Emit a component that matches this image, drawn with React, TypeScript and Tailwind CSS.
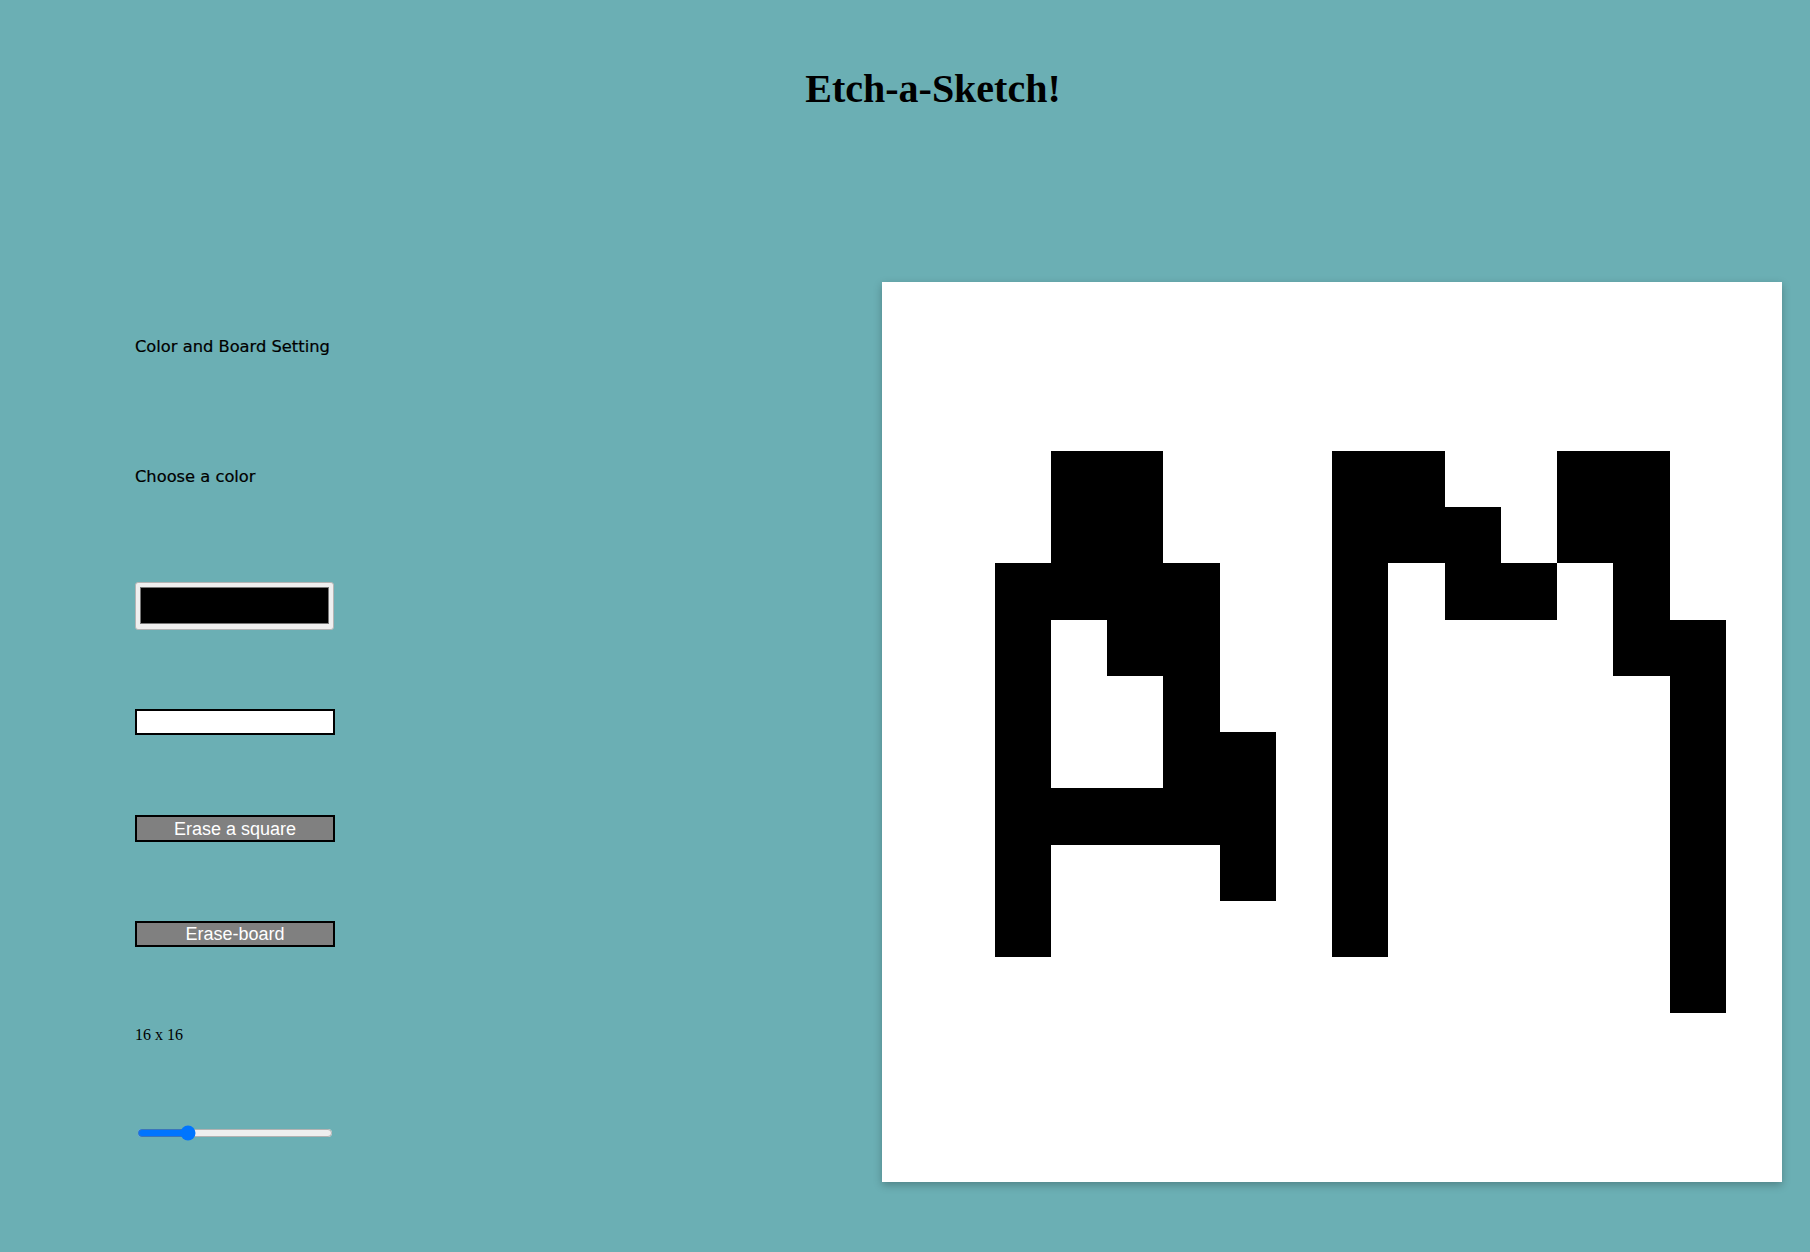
import React from 'react'

// rows of filled squares on the 16x16 board (row -> columns)
const filled: Record<number, number[]> = {
  3: [3, 4, 8, 9, 12, 13],
  4: [3, 4, 8, 9, 10, 12, 13],
  5: [2, 3, 4, 5, 8, 10, 11, 13],
  6: [2, 4, 5, 8, 13, 14],
  7: [2, 5, 8, 14],
  8: [2, 5, 6, 8, 14],
  9: [2, 3, 4, 5, 6, 8, 14],
  10: [2, 6, 8, 14],
  11: [2, 8, 14],
  12: [14],
}

const SIZE = 16

const Board: React.FC = () => {
  const cells = []
  for (let r = 0; r < SIZE; r++) {
    for (let c = 0; c < SIZE; c++) {
      const on = filled[r]?.includes(c)
      cells.push(
        <div key={`${r}-${c}`} className={on ? 'bg-black' : 'bg-white'}></div>
      )
    }
  }
  return (
    <div className="grid grid-cols-16 grid-rows-16 w-[900px] h-[900px] bg-white shadow-[0_3px_8px_rgba(0,0,0,0.25)]">
      {cells}
    </div>
  )
}

const labelFont = { fontFamily: '"DejaVu Sans", Verdana, sans-serif', WebkitTextStroke: '0.2px black' }
const btnFont = { fontFamily: '"Liberation Sans", Arial, sans-serif' }

export default function App() {
  return (
    <div className="min-h-screen w-full bg-[#6bafb4] text-black">
      <h1
        className="pt-[66px] pl-[56px] text-center text-[40px] leading-[46px] font-bold"
        style={{ fontFamily: '"Liberation Serif", "Times New Roman", serif' }}
      >
        Etch-a-Sketch!
      </h1>

      <div className="flex mt-[170px] pl-[135px] pr-[28px] pb-[70px]">
        <div className="flex flex-col w-[200px]">
          <p className="mt-[55px] text-[16.3px] leading-[19px] whitespace-nowrap" style={labelFont}>
            Color and Board Setting
          </p>
          <p className="mt-[111px] text-[16.3px] leading-[19px] whitespace-nowrap" style={labelFont}>
            Choose a color
          </p>

          <div className="mt-[96px] w-[199px] h-[48px] bg-[#efefef] border border-[#b5b5b5] rounded-[3px] px-[4px] pt-[4px] pb-[5px]">
            <div className="w-full h-full bg-black border border-[#777]"></div>
          </div>

          <input
            type="text"
            className="mt-[79px] w-[200px] h-[26px] bg-white border-2 border-black outline-none"
          />

          <button
            className="mt-[80px] w-[200px] h-[27px] bg-[#808080] border-2 border-black text-white text-[18px] leading-[20px]"
            style={btnFont}
          >
            Erase a square
          </button>
          <button
            className="mt-[79px] w-[200px] h-[26px] bg-[#808080] border-2 border-black text-white text-[18px] leading-[20px]"
            style={btnFont}
          >
            Erase-board
          </button>

          <p
            className="mt-[79px] text-[16px] leading-[18px]"
            style={{ fontFamily: '"Liberation Serif", "Times New Roman", serif' }}
          >
            16 x 16
          </p>

          <input
            type="range"
            min={1}
            max={64}
            defaultValue={16}
            className="mt-[81px] ml-[2px] w-[196px] h-[16px]"
          />
        </div>

        <div className="ml-auto">
          <Board />
        </div>
      </div>
    </div>
  )
}
